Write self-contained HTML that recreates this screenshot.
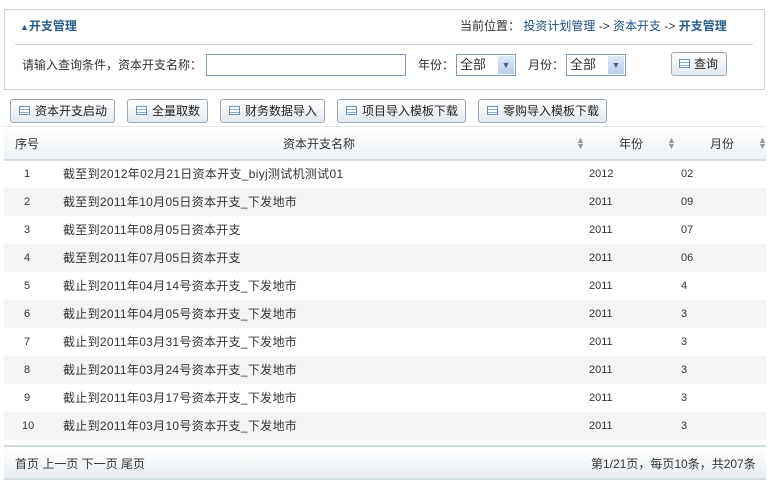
<!DOCTYPE html>
<html><head><meta charset="utf-8"><style>
body{margin:0;width:770px;height:492px;background:#fff;font-family:"Liberation Sans","Noto Sans CJK SC",sans-serif;font-size:12px;color:#333;position:relative;overflow:hidden}
.a{position:absolute;white-space:nowrap}
.panel{position:absolute;left:4px;top:9px;width:761px;height:81px;border:1px solid #c8d3dc;box-sizing:border-box}
.btn{position:absolute;top:99px;height:24px;border:1px solid #9aa8b4;border-radius:3px;background:linear-gradient(#fff,#e3e9ef);box-sizing:border-box;line-height:22px;font-size:12px;color:#222;padding-left:24px}
.ic{position:absolute;left:8px;top:6px;width:11px;height:9px;border:1px solid #6d8fb5;background:repeating-linear-gradient(#fff 0 2px,#8fb0d4 2px 3px);box-sizing:border-box}
.sel{position:absolute;top:54px;width:60px;height:22px;border:1px solid #7f9db9;box-sizing:border-box;background:#fff;font-size:13px;line-height:20px;padding-left:3px}
.sel i{position:absolute;right:1px;top:1px;width:16px;height:18px;background:linear-gradient(#dfe8f7,#b9cdf0);font-style:normal;color:#4d6185;font-size:9px;text-align:center;line-height:18px}
.row{position:absolute;left:4px;width:762px;height:28px;line-height:28px;font-size:11px}
.row span{position:absolute}
.row span.n{font-size:12px;letter-spacing:0.3px}
.arr{position:absolute;color:#999;font-size:9px;line-height:6px;top:137px}
</style></head><body>
<div class="panel"></div>
<div class="a" style="left:20px;top:17px;font-weight:bold;color:#2a5c8a;font-size:12px"><span style="font-size:9px">▲</span>开支管理</div>
<div class="a" style="left:460px;top:17px;color:#333">当前位置： <span style="color:#1f4f7e">投资计划管理</span> -&gt; <span style="color:#1f4f7e">资本开支</span> -&gt; <span style="color:#2a5c8a;font-weight:bold">开支管理</span></div>
<div class="a" style="left:15px;top:44px;width:738px;height:1px;background:#ccd6de"></div>
<div class="a" style="left:22px;top:56px">请输入查询条件，资本开支名称：</div>
<div class="a" style="left:206px;top:54px;width:200px;height:22px;border:1px solid #7f9db9;box-sizing:border-box"></div>
<div class="a" style="left:418px;top:56px">年份：</div>
<div class="sel" style="left:456px">全部<i>▼</i></div>
<div class="a" style="left:528px;top:56px">月份：</div>
<div class="sel" style="left:566px">全部<i>▼</i></div>
<div class="btn" style="left:671px;top:52px;width:56px;padding-left:22px">查询<b class="ic" style="left:7px"></b></div>
<div class="btn" style="left:10px;width:105px"><b class="ic"></b>资本开支启动</div>
<div class="btn" style="left:127px;width:81px"><b class="ic"></b>全量取数</div>
<div class="btn" style="left:220px;width:105px"><b class="ic"></b>财务数据导入</div>
<div class="btn" style="left:337px;width:129px"><b class="ic"></b>项目导入模板下载</div>
<div class="btn" style="left:478px;width:129px"><b class="ic"></b>零购导入模板下载</div>
<div class="a" style="left:4px;top:126px;width:762px;height:32px;background:linear-gradient(#fff,#eef2f5);border-top:1px solid #e3e8ec;border-bottom:2px solid #d5dee5"></div>
<div class="a" style="left:15px;top:135px">序号</div>
<div class="a" style="left:283px;top:135px">资本开支名称</div>
<div class="a" style="left:619px;top:135px">年份</div>
<div class="a" style="left:710px;top:135px">月份</div>
<div class="arr" style="left:576px">▲<br>▼</div>
<div class="arr" style="left:667px">▲<br>▼</div>
<div class="arr" style="left:758px">▲<br>▼</div>
<div class="row" style="top:160px"><span style="left:20px">1</span><span class="n" style="left:59px">截至到2012年02月21日资本开支_biyj测试机测试01</span><span style="left:585px">2012</span><span style="left:677px">02</span></div>
<div class="row" style="top:188px;background:#f4f4f4"><span style="left:20px">2</span><span class="n" style="left:59px">截至到2011年10月05日资本开支_下发地市</span><span style="left:585px">2011</span><span style="left:677px">09</span></div>
<div class="row" style="top:216px"><span style="left:20px">3</span><span class="n" style="left:59px">截至到2011年08月05日资本开支</span><span style="left:585px">2011</span><span style="left:677px">07</span></div>
<div class="row" style="top:244px;background:#f4f4f4"><span style="left:20px">4</span><span class="n" style="left:59px">截至到2011年07月05日资本开支</span><span style="left:585px">2011</span><span style="left:677px">06</span></div>
<div class="row" style="top:272px"><span style="left:20px">5</span><span class="n" style="left:59px">截止到2011年04月14号资本开支_下发地市</span><span style="left:585px">2011</span><span style="left:677px">4</span></div>
<div class="row" style="top:300px;background:#f4f4f4"><span style="left:20px">6</span><span class="n" style="left:59px">截止到2011年04月05号资本开支_下发地市</span><span style="left:585px">2011</span><span style="left:677px">3</span></div>
<div class="row" style="top:328px"><span style="left:20px">7</span><span class="n" style="left:59px">截止到2011年03月31号资本开支_下发地市</span><span style="left:585px">2011</span><span style="left:677px">3</span></div>
<div class="row" style="top:356px;background:#f4f4f4"><span style="left:20px">8</span><span class="n" style="left:59px">截止到2011年03月24号资本开支_下发地市</span><span style="left:585px">2011</span><span style="left:677px">3</span></div>
<div class="row" style="top:384px"><span style="left:20px">9</span><span class="n" style="left:59px">截止到2011年03月17号资本开支_下发地市</span><span style="left:585px">2011</span><span style="left:677px">3</span></div>
<div class="row" style="top:412px;background:#f4f4f4"><span style="left:18px">10</span><span class="n" style="left:59px">截止到2011年03月10号资本开支_下发地市</span><span style="left:585px">2011</span><span style="left:677px">3</span></div>
<div class="a" style="left:4px;top:445px;width:762px;height:35px;background:linear-gradient(#fff,#e9eef2);border-top:2px solid #d2dce3;border-bottom:2px solid #d2dce3;box-sizing:border-box"></div>
<div class="a" style="left:15px;top:455px">首页 上一页 下一页 尾页</div>
<div class="a" style="left:591px;top:455px">第1/21页，每页10条，共207条</div>
</body></html>
